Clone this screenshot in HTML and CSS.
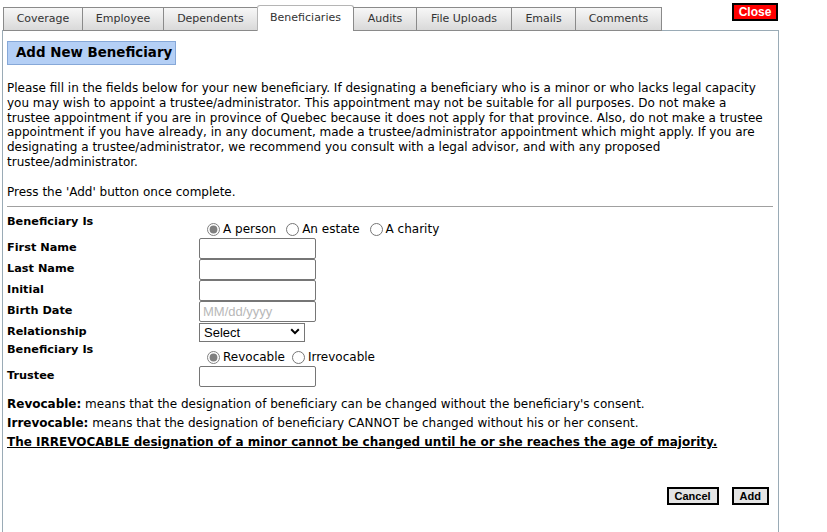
FILE: index.html
```html
<!DOCTYPE html>
<html>
<head>
<meta charset="utf-8">
<link rel="stylesheet" href="styles.css">
</head>
<body>
<div class="page">
  <div class="header">
    <div class="tabs">
      <div class="tab t-coverage">Coverage</div>
      <div class="tab t-employee">Employee</div>
      <div class="tab t-dependents">Dependents</div>
      <div class="tab active t-benef">Beneficiaries</div>
      <div class="tab t-audits">Audits</div>
      <div class="tab t-files">File Uploads</div>
      <div class="tab t-emails">Emails</div>
      <div class="tab t-comments">Comments</div>
    </div>
    <button class="close">Close</button>
  </div>
  <div class="panel">
    <div class="title">Add New Beneficiary</div>
    <p class="intro">Please fill in the fields below for your new beneficiary. If designating a beneficiary who is a minor or who lacks legal capacity you may wish to appoint a trustee/administrator. This appointment may not be suitable for all purposes. Do not make a trustee appointment if you are in province of Quebec because it does not apply for that province. Also, do not make a trustee appointment if you have already, in any document, made a trustee/administrator appointment which might apply. If you are designating a trustee/administrator, we recommend you consult with a legal advisor, and with any proposed trustee/administrator.</p>
    <p class="intro press">Press the 'Add' button once complete.</p>
    <div class="rule"></div>
    <div class="form">
      <div class="row r-radio1">
        <div class="label">Beneficiary Is</div>
        <div class="field radios">
          <label class="opt"><input type="radio" name="bt" checked>A person</label>
          <label class="opt"><input type="radio" name="bt">An estate</label>
          <label class="opt"><input type="radio" name="bt">A charity</label>
        </div>
      </div>
      <div class="row r-input">
        <div class="label">First Name</div>
        <div class="field"><input class="text" type="text"></div>
      </div>
      <div class="row r-input">
        <div class="label">Last Name</div>
        <div class="field"><input class="text" type="text"></div>
      </div>
      <div class="row r-input">
        <div class="label">Initial</div>
        <div class="field"><input class="text" type="text"></div>
      </div>
      <div class="row r-input">
        <div class="label">Birth Date</div>
        <div class="field"><input class="text" type="text" placeholder="MM/dd/yyyy"></div>
      </div>
      <div class="row r-select">
        <div class="label">Relationship</div>
        <div class="field selwrap">
          <select class="sel"><option>Select</option></select>
          <svg class="chev" width="10" height="7" viewBox="0 0 10 7"><path d="M1.2 1.3 L5 5.1 L8.8 1.3" fill="none" stroke="#000" stroke-width="2"/></svg>
        </div>
      </div>
      <div class="row r-radio2">
        <div class="label">Beneficiary Is</div>
        <div class="field radios">
          <label class="opt"><input type="radio" name="rv" checked>Revocable</label>
          <label class="opt"><input type="radio" name="rv">Irrevocable</label>
        </div>
      </div>
      <div class="row r-input">
        <div class="label">Trustee</div>
        <div class="field"><input class="text" type="text"></div>
      </div>
    </div>
    <div class="notes">
      <div class="note"><b>Revocable:</b> means that the designation of beneficiary can be changed without the beneficiary's consent.</div>
      <div class="note"><b>Irrevocable:</b> means that the designation of beneficiary CANNOT be changed without his or her consent.</div>
      <div class="note warn">The IRREVOCABLE designation of a minor cannot be changed until he or she reaches the age of majority.</div>
    </div>
    <div class="actions">
      <button class="btn">Cancel</button>
      <button class="btn">Add</button>
    </div>
  </div>
</div>
</body>
</html>
```

FILE: styles.css
```css
html, body {
  margin: 0;
  padding: 0;
  background: #fff;
}
body {
  font-family: "DejaVu Sans", Verdana, sans-serif;
  color: #000;
  height: 532px;
  overflow: hidden;
}
.page {
  width: 779px;
  padding-top: 5px;
}
.header {
  display: flex;
  align-items: flex-start;
  padding-left: 3px;
  height: 26px;
  margin-bottom: -1px;
  position: relative;
  z-index: 2;
}
.tabs {
  display: flex;
  align-items: flex-end;
  height: 26px;
}
.tab {
  box-sizing: border-box;
  height: 24px;
  border: 1px solid #8a8a8a;
  border-right: none;
  background: linear-gradient(#f7f7f7, #d9d9d9);
  color: #333;
  font-size: 11px;
  line-height: 22px;
  text-align: center;
}
.t-comments { border-right: 1px solid #8a8a8a; }
.t-coverage { width: 79px; }
.t-employee { width: 81px; }
.t-dependents { width: 94px; }
.t-benef { width: 97px; }
.t-audits { width: 63px; }
.t-files { width: 95px; }
.t-emails { width: 64px; }
.t-comments { width: 87px; }
.tab.active {
  height: 26px;
  background: #fff;
  border: 1px solid #b5b5b5;
  border-bottom: none;
  border-radius: 3px 3px 0 0;
  line-height: 24px;
  margin-right: -1px;
}
.close {
  margin-left: auto;
  margin-top: -2px;
  box-sizing: border-box;
  width: 46px;
  height: 18px;
  padding: 0;
  background: #f00;
  border: 2px solid #000;
  color: #fff;
  font-family: "Liberation Sans", Arial, sans-serif;
  font-weight: bold;
  font-size: 12px;
  line-height: 14px;
  margin-right: 1px;
}
.panel {
  margin-left: 2px;
  border-top: 1px solid #9aabb6;
  border-left: 1px solid #9aabb6;
  border-right: 1px solid #9aabb6;
  height: 520px;
  padding: 10px 5px 0 4px;
  position: relative;
  z-index: 1;
}
.title {
  display: inline-block;
  vertical-align: top;
  box-sizing: border-box;
  height: 24px;
  width: 169px;
  background: #b4cff5;
  border: 1px solid #86a8d8;
  font-weight: bold;
  font-size: 13.4px;
  line-height: 22px;
  padding-left: 8px;
}
.intro {
  margin: 16px 0 0 0;
  font-size: 12px;
  line-height: 14.8px;
  width: 766px;
}
.intro.press { margin-top: 15px; }
.rule {
  height: 1px;
  background: #a0a0a0;
  margin: 6px 0 0 0;
  width: 766px;
}
.form {
  margin-top: 3px;
}
.row {
  display: flex;
}
.label {
  width: 192px;
  flex: none;
  font-weight: bold;
  font-size: 11.3px;
  line-height: 13px;
}
.r-radio1 { height: 28px; }
.r-radio1 .label { padding-top: 5px; }
.r-radio1 .field { padding-top: 11px; }
.r-input { height: 21px; }
.r-input .label { padding-top: 3px; }
.r-select { height: 19px; }
.r-select .label { padding-top: 3px; }
.r-radio2 { height: 25px; }
.r-radio2 .label { padding-top: 2px; }
.r-radio2 .field { padding-top: 8px; }
.radios {
  display: flex;
  font-size: 12px;
  line-height: 14px;
  padding-left: 8px;
}
.r-radio1 .radios { gap: 10px; }
.r-radio2 .radios { gap: 7px; }
.opt {
  display: flex;
  align-items: center;
}
.opt input {
  margin: 0 3px 0 0;
  width: 13px;
  height: 13px;
  accent-color: #808080;
}
.text {
  box-sizing: border-box;
  width: 117px;
  height: 21px;
  border: 1px solid #767676;
  border-radius: 2px;
  padding: 1px 3px;
  margin: 0;
  font-family: "Liberation Sans", Arial, sans-serif;
  font-size: 13px;
}
.text::placeholder { color: #b8b8b8; }
.selwrap {
  position: relative;
  height: 19px;
}
.sel {
  -webkit-appearance: none;
  appearance: none;
  box-sizing: border-box;
  width: 106px;
  height: 19px;
  margin: 0;
  padding: 0 0 0 4px;
  border: 1px solid #767676;
  border-radius: 0;
  font-family: "Liberation Sans", Arial, sans-serif;
  font-size: 13px;
  line-height: 17px;
  background: #fff;
  color: #000;
}
.chev {
  position: absolute;
  left: 91px;
  top: 6px;
  pointer-events: none;
}
.notes {
  margin-top: 8px;
}
.note {
  font-size: 12px;
  line-height: 19px;
}
.warn {
  font-weight: bold;
  text-decoration: underline;
}
.actions {
  display: flex;
  justify-content: flex-end;
  gap: 13px;
  width: 762px;
  margin-top: 35px;
}
.btn {
  box-sizing: border-box;
  height: 18px;
  padding: 0 6px;
  border: 2px solid #000;
  background: #e4e4e4;
  font-family: "Liberation Sans", Arial, sans-serif;
  font-weight: bold;
  font-size: 11px;
  line-height: 14px;
  color: #000;
}
```
